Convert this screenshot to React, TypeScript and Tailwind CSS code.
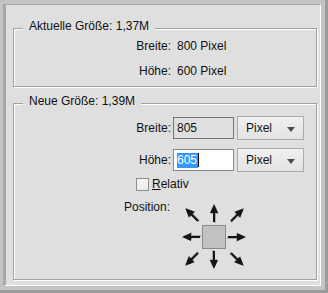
import React from "react";

const font = "font-['Liberation_Sans',Arial,sans-serif]";

function Arrow({ x, y, r }: { x: number; y: number; r: number }) {
  return (
    <g transform={`translate(${x} ${y}) rotate(${r})`}>
      <g transform="translate(0.8 0.8)" opacity="0.3">
        <rect x={-1} y={-11} width={2} height={11} fill="#000" />
        <polygon points="0,-18 -4,-9 4,-9" fill="#000" />
      </g>
      <rect x={-1} y={-11} width={2} height={11} fill="#141414" />
      <polygon points="0,-18 -4,-9 4,-9" fill="#141414" />
    </g>
  );
}

function Legend({ children }: { children: React.ReactNode }) {
  return (
    <div className="absolute left-[9px] top-[-10px] bg-[#dfdfdf] px-[6px] leading-[14px] whitespace-nowrap">
      {children}
    </div>
  );
}

function Select() {
  return (
    <div className="ml-[3px] flex h-[24px] w-[67px] items-center justify-between border border-[#ababab] bg-gradient-to-b from-[#f0f0f0] to-[#e3e3e3] pl-[8px] pr-[8px]">
      <span className="leading-[14px]">Pixel</span>
      <svg width="8" height="5" viewBox="0 0 8 5" className="mt-[2px]">
        <polygon points="0,0 8,0 4,5" fill="#4a4a4a" />
      </svg>
    </div>
  );
}

export default function App() {
  return (
    <div
      className={`${font} box-border h-[293px] w-[328px] border-r-[3px] border-b-[3px] border-r-[#9c9c9c] border-b-[#9c9c9c] bg-[#c4c4c4] pt-[4px] pr-[4px] pb-[4px] pl-[3px] text-[12px] text-[#111]`}
    >
      <div className="box-border h-full border-t border-l-[3px] border-r border-b border-t-[#a9a9a9] border-l-[#a9a9a9] border-r-white border-b-white bg-[#dfdfdf] pt-[23px] pl-[7px]">
        {/* Aktuelle Größe */}
        <div className="relative box-border h-[59px] w-[304px] border border-[#a0a0a0] pt-[9px] shadow-[1px_1px_0_#fff,inset_1px_1px_0_#fff]">
          <Legend>Aktuelle Größe: 1,37M</Legend>
          <div className="flex h-[16px] items-center">
            <div className="w-[157px] text-right">Breite:</div>
            <div className="ml-[6px]">800 Pixel</div>
          </div>
          <div className="mt-[9px] flex h-[16px] items-center">
            <div className="w-[157px] text-right">Höhe:</div>
            <div className="ml-[6px]">600 Pixel</div>
          </div>
        </div>

        {/* Neue Größe */}
        <div className="relative mt-[16px] box-border h-[177px] w-[304px] border border-[#a0a0a0] pt-[12px] shadow-[1px_1px_0_#fff,inset_1px_1px_0_#fff]">
          <Legend>Neue Größe: 1,39M</Legend>
          <div className="flex h-[24px] items-center">
            <div className="w-[157px] text-right">Breite:</div>
            <div className="ml-[2px] box-border flex h-[22px] w-[61px] items-center border border-[#767676] bg-[#dfdfdf] pl-[3px]">
              805
            </div>
            <Select />
          </div>
          <div className="mt-[8px] flex h-[24px] items-center">
            <div className="w-[157px] text-right">Höhe:</div>
            <div className="ml-[2px] box-border flex h-[22px] w-[61px] items-center border border-[#8a8a8a] bg-white pl-[3px]">
              <span className="bg-[#3399ff] pr-[1px] leading-[15px] text-white">605</span>
              <span className="h-[14px] w-px bg-black" />
            </div>
            <Select />
          </div>
          <div className="mt-[5px] flex h-[14px] items-center pl-[122px]">
            <div className="box-border h-[13px] w-[13px] border border-[#8e8e8e] bg-gradient-to-b from-[#f6f6f6] to-[#eaeaea]" />
            <span className="ml-[3px] leading-[14px]">
              <span className="underline">R</span>elativ
            </span>
          </div>
          <div className="mt-[9px] flex items-start">
            <div className="w-[156px] text-right leading-[14px]">Position:</div>
            <svg width="72" height="70" viewBox="0 0 72 70" className="ml-[8px]">
              <Arrow x={36} y={22} r={0} />
              <Arrow x={36} y={51} r={180} />
              <Arrow x={22} y={37} r={-90} />
              <Arrow x={50} y={37} r={90} />
              <Arrow x={20} y={21} r={-45} />
              <Arrow x={53} y={21} r={45} />
              <Arrow x={20} y={53} r={-135} />
              <Arrow x={53} y={53} r={135} />
              <rect x={24.5} y={25.5} width={23} height={23} fill="#c2c2c2" stroke="#8a8a8a" />
            </svg>
          </div>
        </div>
      </div>
    </div>
  );
}
